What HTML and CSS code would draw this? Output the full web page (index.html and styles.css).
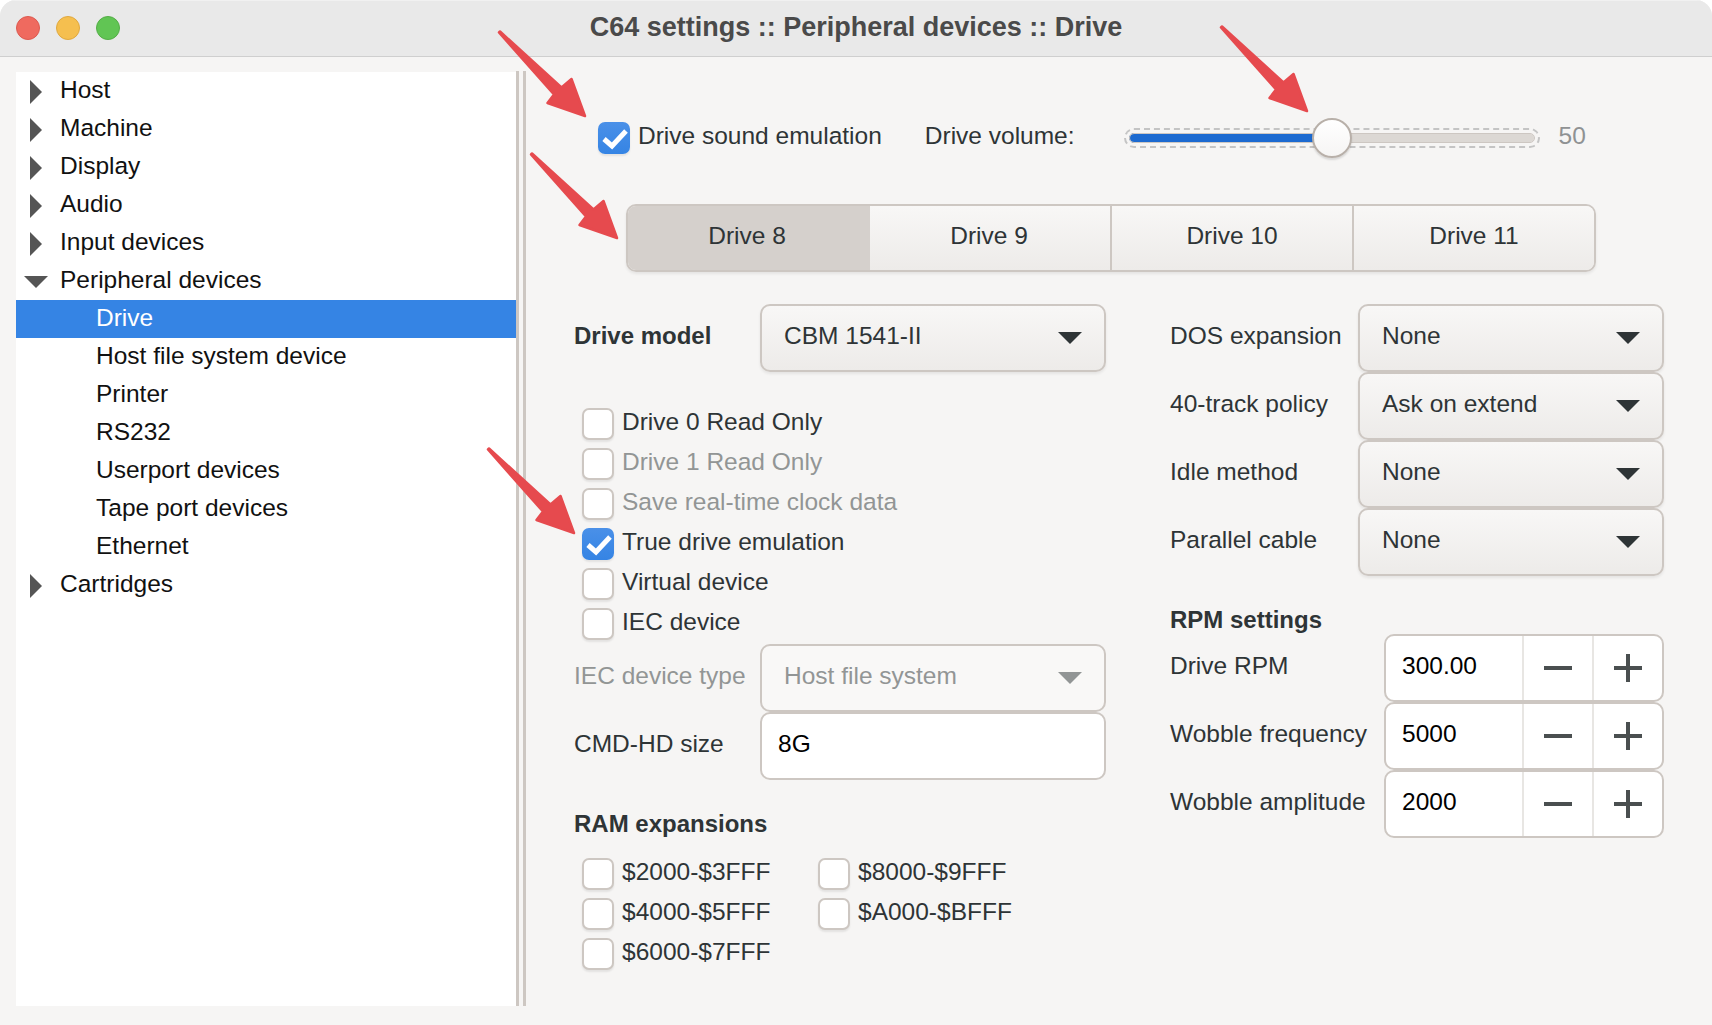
FILE: index.html
```html
<!DOCTYPE html>
<html lang="en">
<head>
  <meta charset="UTF-8" />
  <meta name="viewport" content="width=device-width, initial-scale=1" />
  <title>C64 settings</title>
  <link rel="stylesheet" href="styles.css">
</head>
<body>
  <div class="window">
    <header class="titlebar">
      <div class="lights">
        <span class="light red"></span>
        <span class="light yellow"></span>
        <span class="light green"></span>
      </div>
      <h1 class="title">C64 settings :: Peripheral devices :: Drive</h1>
    </header>

    <div class="content">
      <nav class="tree">
        <div class="tree-row"><span class="expander"><i class="arrow-right"></i></span>Host</div>
        <div class="tree-row"><span class="expander"><i class="arrow-right"></i></span>Machine</div>
        <div class="tree-row"><span class="expander"><i class="arrow-right"></i></span>Display</div>
        <div class="tree-row"><span class="expander"><i class="arrow-right"></i></span>Audio</div>
        <div class="tree-row"><span class="expander"><i class="arrow-right"></i></span>Input devices</div>
        <div class="tree-row"><span class="expander"><i class="arrow-down"></i></span>Peripheral devices</div>
        <div class="tree-row child selected">Drive</div>
        <div class="tree-row child">Host file system device</div>
        <div class="tree-row child">Printer</div>
        <div class="tree-row child">RS232</div>
        <div class="tree-row child">Userport devices</div>
        <div class="tree-row child">Tape port devices</div>
        <div class="tree-row child">Ethernet</div>
        <div class="tree-row"><span class="expander"><i class="arrow-right"></i></span>Cartridges</div>
      </nav>
      <div class="sash"></div>

      <main class="panel">
        <div class="top-row">
          <div class="check-row">
            <span class="check on"><svg viewBox="0 0 32 32"><polyline points="6,17 14,24 28,9" /></svg></span>
            Drive sound emulation
          </div>
          <span class="volume-label">Drive volume:</span>
          <div class="slider">
            <div class="slider-track"><div class="slider-fill"></div></div>
            <div class="slider-thumb"></div>
          </div>
          <span class="slider-value">50</span>
        </div>

        <div class="tabs">
          <div class="tab active">Drive 8</div>
          <div class="tab">Drive 9</div>
          <div class="tab">Drive 10</div>
          <div class="tab">Drive 11</div>
        </div>

        <div class="columns">
          <section class="col-left">
            <div class="form-row">
              <span class="form-label bold">Drive model</span>
              <div class="combo"><span>CBM 1541-II</span><i class="combo-arrow"></i></div>
            </div>

            <div class="check-list">
              <div class="check-row"><span class="check"></span>Drive 0 Read Only</div>
              <div class="check-row disabled"><span class="check"></span>Drive 1 Read Only</div>
              <div class="check-row disabled"><span class="check"></span>Save real-time clock data</div>
              <div class="check-row">
                <span class="check on"><svg viewBox="0 0 32 32"><polyline points="6,17 14,24 28,9" /></svg></span>
                True drive emulation
              </div>
              <div class="check-row"><span class="check"></span>Virtual device</div>
              <div class="check-row"><span class="check"></span>IEC device</div>
            </div>

            <div class="form-row iec-row disabled">
              <span class="form-label">IEC device type</span>
              <div class="combo"><span>Host file system</span><i class="combo-arrow"></i></div>
            </div>
            <div class="form-row">
              <span class="form-label">CMD-HD size</span>
              <div class="entry">8G</div>
            </div>

            <h2 class="heading ram-heading">RAM expansions</h2>
            <div class="ram-grid">
              <div class="check-row"><span class="check"></span>$2000-$3FFF</div>
              <div class="check-row"><span class="check"></span>$8000-$9FFF</div>
              <div class="check-row"><span class="check"></span>$4000-$5FFF</div>
              <div class="check-row"><span class="check"></span>$A000-$BFFF</div>
              <div class="check-row"><span class="check"></span>$6000-$7FFF</div>
            </div>
          </section>

          <section class="col-right">
            <div class="form-row wide">
              <span class="form-label">DOS expansion</span>
              <div class="combo"><span>None</span><i class="combo-arrow"></i></div>
            </div>
            <div class="form-row wide">
              <span class="form-label">40-track policy</span>
              <div class="combo"><span>Ask on extend</span><i class="combo-arrow"></i></div>
            </div>
            <div class="form-row wide">
              <span class="form-label">Idle method</span>
              <div class="combo"><span>None</span><i class="combo-arrow"></i></div>
            </div>
            <div class="form-row wide">
              <span class="form-label">Parallel cable</span>
              <div class="combo"><span>None</span><i class="combo-arrow"></i></div>
            </div>

            <h2 class="heading rpm-heading">RPM settings</h2>
            <div class="form-row spin-row">
              <span class="form-label">Drive RPM</span>
              <div class="spin"><span class="spin-value">300.00</span><span class="spin-btn"><i class="minus"></i></span><span class="spin-btn"><i class="plus"></i></span></div>
            </div>
            <div class="form-row spin-row">
              <span class="form-label">Wobble frequency</span>
              <div class="spin"><span class="spin-value">5000</span><span class="spin-btn"><i class="minus"></i></span><span class="spin-btn"><i class="plus"></i></span></div>
            </div>
            <div class="form-row spin-row">
              <span class="form-label">Wobble amplitude</span>
              <div class="spin"><span class="spin-value">2000</span><span class="spin-btn"><i class="minus"></i></span><span class="spin-btn"><i class="plus"></i></span></div>
            </div>
          </section>
        </div>
      </main>
    </div>
  </div>

  <!-- red callout arrows drawn on top of the screenshot -->
  <svg class="callouts" viewBox="0 0 1712 1025">
    <defs>
      <path id="callout" d="M585 116 L571.5 79 L561.5 87.5 L500 31.5 L499 32.5 L554 94.5 L547.5 103 Z" />
    </defs>
    <use href="#callout" />
    <use href="#callout" x="32" y="122" />
    <use href="#callout" x="-11" y="417" />
    <use href="#callout" x="722" y="-5" />
  </svg>
</body>
</html>
```

FILE: styles.css
```css
* {
  box-sizing: border-box;
}

html,
body {
  margin: 0;
  padding: 0;
  background: #fff;
}

body {
  position: relative;
  width: 1712px;
  height: 1025px;
  overflow: hidden;
  font-family: "Liberation Sans", Arial, sans-serif;
  font-size: 24.5px;
  color: #2e3436;
}

.window {
  height: 1025px;
  background: #f6f5f4;
  border-radius: 16px 16px 0 0;
  overflow: hidden;
}

.titlebar {
  position: relative;
  height: 57px;
  display: flex;
  align-items: center;
  justify-content: center;
  background: #e9e9e9;
  border-top: 1px solid #f1f1f1;
  border-bottom: 1px solid #cfcfcf;
}

.lights {
  position: absolute;
  left: 16px;
  top: 15px;
  display: flex;
  gap: 16px;
}

.light {
  width: 24px;
  height: 24px;
  border-radius: 50%;
}

.red {
  background: #ef6a5f;
  border: 1px solid #dc5a50;
}

.yellow {
  background: #f5bf4f;
  border: 1px solid #dfa83f;
}

.green {
  background: #61c554;
  border: 1px solid #54ad47;
}

.title {
  margin: 0;
  padding-bottom: 3px;
  font-size: 27px;
  font-weight: bold;
  color: #4a4a4a;
}

.content {
  display: flex;
  height: 968px;
  padding: 15px 0 19px 16px;
}

/* sidebar tree */
.tree {
  width: 500px;
  flex: none;
  background: #fff;
  color: #111;
}

.tree-row {
  height: 38px;
  display: flex;
  align-items: center;
  padding-bottom: 2px;
}

.tree-row.child {
  padding-left: 80px;
}

.tree-row.selected {
  background: #3584e4;
  color: #fff;
}

.expander {
  width: 44px;
  display: flex;
  justify-content: center;
  padding: 3px 4px 0 0;
}

.arrow-right {
  border-left: 12px solid #555;
  border-top: 12px solid transparent;
  border-bottom: 12px solid transparent;
}

.arrow-down {
  border-top: 12px solid #555;
  border-left: 12px solid transparent;
  border-right: 12px solid transparent;
}

.sash {
  width: 10px;
  flex: none;
  border-left: 3px solid #cdc7c2;
  border-right: 3px solid #cdc7c2;
  margin-top: -1px;
}

/* settings panel */
.panel {
  flex: 1;
  margin-top: -15px;
  padding-top: 61px;
}

.top-row {
  display: flex;
  align-items: center;
  height: 40px;
  margin-left: 72px;
}

.volume-label {
  margin-left: 43px;
  padding-bottom: 4px;
}

.slider {
  position: relative;
  width: 416px;
  height: 20px;
  margin-left: 49px;
  padding: 4px 4px 0;
  border: 2px dashed #c4c4c4;
  border-radius: 10px;
}

.slider-track {
  height: 8px;
  background: #dcd8d4;
  border-radius: 4px;
  outline: 1px solid #cdc7c2;
}

.slider-fill {
  width: 205px;
  height: 8px;
  background: #1c6ad0;
  border-radius: 4px;
  outline: 1px solid #1a5fb4;
}

.slider-thumb {
  position: absolute;
  left: 186px;
  top: -12px;
  width: 40px;
  height: 40px;
  border-radius: 50%;
  background: linear-gradient(#fff, #f6f5f4);
  border: 2px solid #b8b0a9;
  box-shadow: 0 2px 2px rgba(0, 0, 0, 0.12);
}

.slider-value {
  margin-left: 19px;
  padding-bottom: 4px;
  color: #8f9293;
}

.tabs {
  display: flex;
  width: 970px;
  height: 68px;
  margin: 46px 0 0 100px;
  border: 2px solid #cdc7c2;
  border-radius: 10px;
  overflow: hidden;
  box-shadow: 0 2px 3px rgba(0, 0, 0, 0.07);
}

.tab {
  flex: 1;
  display: flex;
  align-items: center;
  justify-content: center;
  padding-bottom: 4px;
  background: linear-gradient(#f8f7f6, #edebe9);
  border-right: 2px solid #cdc7c2;
}

.tab:nth-child(-n+2) {
  flex: none;
  width: 242px;
  padding-right: 2px;
}

.tab:last-child {
  border-right: none;
}

.tab.active {
  background: #d5d0cc;
  border-right: none;
  padding-right: 4px;
}

.columns {
  display: flex;
  margin: 32px 0 0 48px;
}

.col-left {
  width: 532px;
  flex: none;
}

.col-right {
  width: 494px;
  flex: none;
  margin-left: 64px;
}

.form-row {
  display: grid;
  grid-template-columns: 186px 1fr;
  align-items: center;
  height: 68px;
}

.form-row.wide {
  grid-template-columns: 188px 1fr;
}

.form-row.spin-row {
  grid-template-columns: 214px 1fr;
}

.form-label {
  padding-bottom: 4px;
}

.bold {
  font-weight: bold;
  font-size: 24px;
}

.disabled {
  color: #929595;
}

.combo,
.entry,
.spin {
  height: 68px;
  align-self: start;
  border: 2px solid #cdc7c2;
  border-radius: 10px;
}

.combo {
  display: flex;
  align-items: center;
  justify-content: space-between;
  padding: 0 22px 4px 22px;
  background: linear-gradient(#f8f7f6, #edebe9);
  box-shadow: 0 2px 3px rgba(0, 0, 0, 0.07);
}

.combo-arrow {
  margin-top: 4px;
  border-top: 12px solid #2e3436;
  border-left: 12px solid transparent;
  border-right: 12px solid transparent;
}

.disabled .combo {
  background: #f9f8f7;
  box-shadow: none;
}

.disabled .combo-arrow {
  border-top-color: #929595;
}

.entry {
  display: flex;
  align-items: center;
  padding: 0 16px 4px;
  background: #fff;
  color: #000;
}

.check-list {
  display: flex;
  flex-direction: column;
  gap: 8px;
  margin: 36px 0 4px 8px;
}

.check-row {
  display: flex;
  align-items: center;
  gap: 8px;
  height: 32px;
  padding-bottom: 5px;
  white-space: nowrap;
}

.check {
  width: 32px;
  height: 32px;
  flex: none;
  align-self: flex-start;
  background: #fff;
  border: 2px solid #cdc7c2;
  border-radius: 7px;
  box-shadow: 0 2px 2px rgba(0, 0, 0, 0.08);
}

.check.on {
  background: linear-gradient(#4a90e8, #3584e4);
  border: none;
}

.check svg {
  display: block;
  width: 32px;
  height: 32px;
}

.check polyline {
  fill: none;
  stroke: #fff;
  stroke-width: 5;
}

.heading {
  margin: 0;
  height: 28px;
  line-height: 28px;
  font-size: 24px;
  font-weight: bold;
}

.ram-heading {
  margin-top: 30px;
}

.ram-grid {
  display: grid;
  grid-template-columns: 236px auto;
  row-gap: 8px;
  margin: 20px 0 0 8px;
}

.rpm-heading {
  margin: 30px 0 0;
}

.spin {
  display: flex;
  background: #fff;
  color: #000;
}

.spin-value {
  flex: 1;
  padding: 0 16px 4px;
  display: flex;
  align-items: center;
}

.spin-btn {
  position: relative;
  width: 70px;
  flex: none;
  border-left: 2px solid #e8e6e3;
}

.minus,
.plus {
  position: absolute;
  left: 20px;
  top: 30px;
  width: 28px;
  height: 4px;
  background: #4a4f50;
}

.plus::after {
  content: "";
  position: absolute;
  left: 12px;
  top: -12px;
  width: 4px;
  height: 28px;
  background: #4a4f50;
}

.callouts {
  position: absolute;
  left: 0;
  top: 0;
  width: 1712px;
  height: 1025px;
  pointer-events: none;
}

.callouts use {
  fill: #e64a4e;
  stroke: #e64a4e;
  stroke-width: 2.5;
  stroke-linejoin: round;
}
```
